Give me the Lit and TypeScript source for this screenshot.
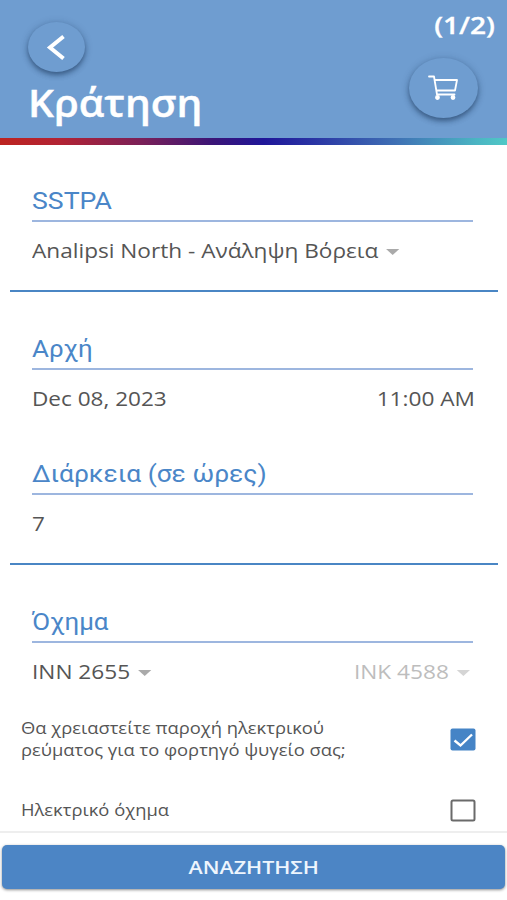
import { LitElement, html, css } from "lit";
import { customElement, property } from "lit/decorators.js";

@customElement("wide-text")
class WideText extends LitElement {
  @property({ type: Number }) ratio = 1.1;
  @property() origin = "left";
  static styles = css`
    :host { display: block; white-space: nowrap; }
    span { display: inline-block; }
  `;
  render() {
    return html`<span style="transform: scaleX(${this.ratio}); transform-origin: ${this.origin} center"><slot></slot></span>`;
  }
}

@customElement("app-root")
class AppRoot extends LitElement {
  static styles = css`
    :host {
      display: flex; flex-direction: column; width: 507px; height: 900px; overflow: hidden;
      box-sizing: border-box; background: #fff; color: #555;
      font-family: "Open Sans", "Noto Sans", sans-serif; font-size: 20.5px; line-height: 30px;
    }
    header { height: 138px; background: #6f9dd0; color: #fff; display: flex; justify-content: space-between; flex: none; }
    .stripe { height: 7px; flex: none; background: linear-gradient(90deg, #bd2420 0%, #b22334 12%, #7a2058 28%, #3b1577 42%, #1f1699 52%, #2a35a4 62%, #3f70b4 78%, #4bb5c3 94%, #50c8c6 100%); }
    .left { padding: 22px 0 0 28px; }
    .right { padding: 8px 12px 0 0; display: flex; flex-direction: column; align-items: flex-end; }
    .round { border-radius: 50%; background: #6f9dd0; display: flex; align-items: center; justify-content: center;
      box-shadow: 0 3px 5px rgba(20,45,80,.5), 0 1px 8px rgba(20,45,80,.2); }
    .back { width: 57px; height: 50px; }
    .cart { width: 69px; height: 60px; margin: 17px 17px 0 0; }
    .title { font-size: 38px; line-height: 52px; font-weight: 600; margin-top: 4px; -webkit-text-stroke: .4px #fff; }
    .count { font-size: 24px; line-height: 33px; font-weight: 600; -webkit-text-stroke: .3px #fff; }
    svg { display: block; }
    main { flex: 1; }
    .group { box-sizing: border-box; margin: 0 9px 0 10px; padding: 0 25px 0 22px; border-bottom: 2px solid #4a86c4; }
    .first { height: 147px; }
    .second { height: 273px; padding-top: 1px; }
    .third { border: 0; height: 152px; padding-top: 1px; }
    .head { color: #4a86c8; font-family: Roboto, "Open Sans", sans-serif; font-size: 24px; line-height: 32px; height: 35px;
      border-bottom: 2px solid #9db6df; padding-top: 40px; }
    .row { display: flex; justify-content: space-between; margin-top: 13px; height: 30px; }
    .more { padding-top: 45px; }
    .time { margin-right: -2px; }
    .arrow { display: inline-block; border: 6px solid transparent; border-top-color: #aaa; border-bottom: 0; margin-left: 7px; vertical-align: 3px; }
    .faded { color: #bdbdbd; margin-right: 3px; }
    .faded .arrow { border-top-color: #d5d5d5; }
    .option { display: flex; justify-content: space-between; align-items: center; padding: 0 31px 0 21px; font-size: 16.5px; line-height: 22px; }
    .power { height: 44px; }
    .electric { height: 22px; margin-top: 38px; }
    .box { width: 26px; height: 23px; }
    footer { height: 69px; flex: none; box-sizing: border-box; border-top: 2px solid #eee; padding: 12px 2px 0; }
    .search { height: 44px; border-radius: 5px; background: #4c85c5; color: #eef5fd; font-size: 18px; font-weight: 600;
      display: flex; align-items: center; justify-content: center; box-shadow: 0 1px 3px rgba(0,0,0,.45); }
  `;
  render() {
    return html`
      <header>
        <div class="left">
          <div class="round back"><svg width="57" height="50" viewBox="0 0 57 50"><path d="M35.500 14.500 L22 25.500 L35.500 36.500" fill="none" stroke="#fff" stroke-width="4" stroke-linecap="butt" stroke-linejoin="miter"/></svg></div>
          <wide-text class="title" ratio="1.07">Κράτηση</wide-text>
        </div>
        <div class="right">
          <wide-text class="count" ratio="1.17" origin="right">(1/2)</wide-text>
          <div class="round cart"><svg width="32" height="26" viewBox="0 0 32 26" fill="none" stroke="#fff" stroke-width="1.8" stroke-linejoin="round" stroke-linecap="round"><path d="M1 1.500H6L9 19.500H26.500M7 5H29L27 15.500H8.500"/><circle cx="9.500" cy="22.500" r="1.500" fill="#fff"/><circle cx="25" cy="22.500" r="1.500" fill="#fff"/></svg></div>
        </div>
      </header>
      <div class="stripe"></div>
      <main>
        <section class="group first">
          <div class="head"><wide-text ratio="1.11">SSTPA</wide-text></div>
          <div class="row"><wide-text ratio="1.103">Analipsi North - Ανάληψη Βόρεια<i class="arrow"></i></wide-text></div>
        </section>
        <section class="group second">
          <div class="head"><wide-text ratio="1.08">Αρχή</wide-text></div>
          <div class="row"><wide-text ratio="1.1">Dec 08, 2023</wide-text><wide-text class="time" ratio="1.105" origin="right">11:00 AM</wide-text></div>
          <div class="head more"><wide-text ratio="1.1">Διάρκεια (σε ώρες)</wide-text></div>
          <div class="row"><wide-text ratio="1.1">7</wide-text></div>
        </section>
        <section class="group third">
          <div class="head"><wide-text ratio="1.08">Όχημα</wide-text></div>
          <div class="row"><wide-text ratio="1.105">INN 2655<i class="arrow"></i></wide-text><wide-text class="faded" ratio="1.105" origin="right">INK 4588<i class="arrow"></i></wide-text></div>
        </section>
        <div class="option power">
          <wide-text ratio="1.112">Θα χρειαστείτε παροχή ηλεκτρικού<br>ρεύματος για το φορτηγό ψυγείο σας;</wide-text>
          <svg class="box" viewBox="0 0 26 23"><rect x=".5" y=".5" width="25" height="22" rx="2" fill="#4584c6"/><path d="M4.500 12.500 L10.500 17.500 L22 6.500" fill="none" stroke="#fff" stroke-width="2.400"/></svg>
        </div>
        <div class="option electric">
          <wide-text ratio="1.112">Ηλεκτρικό όχημα</wide-text>
          <svg class="box" viewBox="0 0 26 23"><rect x="1.500" y="1.500" width="23" height="20" rx="1.500" fill="#fff" stroke="#6a6a6a" stroke-width="2"/></svg>
        </div>
      </main>
      <footer><div class="search"><wide-text ratio="1.19" origin="center">ΑΝΑΖΗΤΗΣΗ</wide-text></div></footer>
    `;
  }
}
